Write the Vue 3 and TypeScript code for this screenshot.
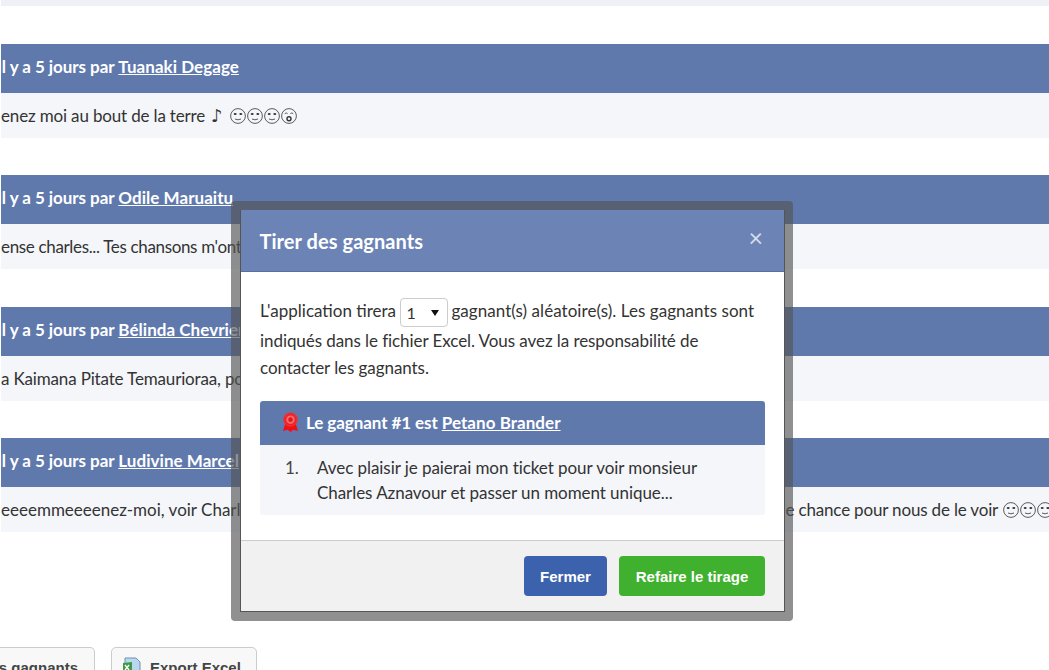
<script setup lang="ts">
interface Post {
  author: string
  text: string
  tail?: string
  note?: boolean
  spacing?: string
  faces: string[]
}

const posts: Post[] = [
  { author: 'Tuanaki Degage', text: 'enez moi au bout de la terre', note: true, faces: ['calm', 'calm', 'calm', 'wow'] },
  { author: 'Odile Maruaitu', text: "ense charles... Tes chansons m'ont", spacing: 'tight', faces: [] },
  { author: 'Bélinda Chevrier', text: 'a Kaimana Pitate Temaurioraa, pour', faces: [] },
  {
    author: 'Ludivine Marcel',
    text: 'eeeemmeeeenez-moi, voir Charles Aznavour en concert serait vraiment un très beau cadeau, et encore un',
    tail: 'e chance pour nous de le voir',
    spacing: 'loose',
    faces: ['calm', 'calm', 'calm'],
  },
]
</script>

<template>
  <div class="page">
    <div class="top-band"></div>

    <article v-for="post in posts" :key="post.author" class="post">
      <header class="post-head">Il y a 5 jours par <a href="#">{{ post.author }}</a></header>
      <div class="post-body" :class="post.spacing">
        <span>{{ post.text }}</span>
        <span v-if="post.tail" class="tail">{{ post.tail }}</span>
        <span v-if="post.note" class="note">♪</span>
        <span v-if="post.faces.length" class="faces">
          <svg v-for="(face, i) in post.faces" :key="i" class="face" viewBox="0 0 16 16">
            <circle cx="8" cy="8" r="7.4" fill="none" stroke="#333" stroke-width="0.8" />
            <template v-if="face === 'calm'">
              <ellipse cx="5.2" cy="6" rx="1.5" ry="1" fill="#333" />
              <ellipse cx="10.8" cy="6" rx="1.5" ry="1" fill="#333" />
              <path d="M5 11 Q8 12.6 11 11" fill="none" stroke="#333" stroke-width="0.8" />
            </template>
            <template v-else>
              <path d="M3.8 5.6 Q5.2 4.4 6.6 5.6 M9.4 5.6 Q10.8 4.4 12.2 5.6" fill="none" stroke="#333" stroke-width="0.8" />
              <circle cx="8" cy="10.8" r="2" fill="none" stroke="#333" stroke-width="1.4" />
            </template>
          </svg>
        </span>
      </div>
    </article>

    <div class="actions">
      <button class="action action-first" type="button">Tirer des gagnants</button>
      <button class="action action-excel" type="button">
        <svg class="xls" viewBox="0 0 20 20">
          <path d="M3 1h11l4 4v14H3z" fill="#b9d8ee" stroke="#6b93b5" />
          <path d="M1 6l9-1v11l-9-1z" fill="#3f9a45" />
          <path d="M3 8l4 5M7 8l-4 5" stroke="#fff" stroke-width="1.4" />
        </svg>
        Export Excel
      </button>
    </div>

    <div class="modal-frame">
      <section class="modal">
        <header class="modal-head">
          <h2>Tirer des gagnants</h2>
          <span class="close">×</span>
        </header>

        <div class="modal-body">
          <p class="intro">
            L'application tirera
            <span class="count-wrap">
              <select class="count">
                <option>1</option>
                <option>2</option>
                <option>3</option>
              </select>
            </span>
            <span class="line-one">gagnant(s) aléatoire(s). Les gagnants sont </span><span class="rest">indiqués dans le fichier Excel. Vous avez la responsabilité de contacter les gagnants.</span>
          </p>

          <div class="winner">
            <div class="winner-head">
              <svg class="rosette" viewBox="0 0 20 22">
                <path d="M5 11 L2 20 L7 18.5 L10 21 L13 18.5 L18 20 L15 11z" fill="#f00f14" />
                <circle cx="10" cy="8" r="7.5" fill="#f5282c" />
                <circle cx="10" cy="8" r="5" fill="#fb6a6a" stroke="#dc1a20" />
                <circle cx="10" cy="8" r="2.4" fill="#dc1a20" />
              </svg>
              <span>Le gagnant #1 est <a href="#">Petano Brander</a></span>
            </div>
            <ol class="winner-list">
              <li>
                <span class="num">1.</span>
                <span>Avec plaisir je paierai mon ticket pour voir monsieur Charles Aznavour et passer un moment unique...</span>
              </li>
            </ol>
          </div>
        </div>

        <footer class="modal-foot">
          <button class="btn btn-blue" type="button">Fermer</button>
          <button class="btn btn-green" type="button">Refaire le tirage</button>
        </footer>
      </section>
    </div>
  </div>
</template>

<style>
html,
body {
  margin: 0;
  height: 670px;
  overflow: hidden;
  background: #fff;
}
</style>

<style scoped>
.page {
  position: relative;
  width: 1049px;
  height: 670px;
  overflow: hidden;
  font-family: Lato, "Open Sans", sans-serif;
  font-size: 17px;
  color: #333;
  box-sizing: border-box;
  padding-left: 1px;
}

.top-band {
  height: 6px;
  background: #eef1f6;
  margin-bottom: 38px;
}

.post {
  margin-bottom: 37px;
}

.post:nth-of-type(2) {
  margin-bottom: 38px;
}

.post-head {
  height: 49px;
  line-height: 45px;
  background: #6079ad;
  color: #fff;
  font-weight: 700;
  letter-spacing: -0.05px;
  text-indent: -4px;
  white-space: nowrap;
  overflow: hidden;
}

.post-head a {
  color: #fff;
  letter-spacing: 0.04px;
  text-decoration: underline;
}

.post-body {
  display: flex;
  align-items: center;
  height: 45px;
  background: #f4f6fa;
  letter-spacing: -0.16px;
  white-space: nowrap;
  overflow: hidden;
}

.post-body.tight {
  letter-spacing: -0.34px;
}

.post-body.loose {
  letter-spacing: 0;
}

.tail {
  letter-spacing: -0.17px;
}

.note {
  margin-left: 6px;
  font-family: "DejaVu Sans", sans-serif;
  font-size: 18px;
  line-height: 1;
}

.faces {
  display: flex;
  flex: none;
  gap: 1px;
  margin-left: 5px;
}

.note + .faces {
  margin-left: 8px;
}

.face {
  flex: none;
  width: 16px;
  height: 16px;
}

.actions {
  display: flex;
  gap: 16px;
  margin: 115px 0 0 -1px;
}

.action {
  display: flex;
  align-items: center;
  height: 40px;
  border: 1px solid #ccc;
  border-radius: 5px;
  background: #f8f8f8;
  color: #444;
  font: 700 15px "Liberation Sans", Arial, sans-serif;
  white-space: nowrap;
}

.action-first {
  width: 95px;
  padding: 0 16px 0 0;
  justify-content: flex-end;
  overflow: hidden;
  border-left: 0;
  border-radius: 0 5px 5px 0;
}

.action-excel {
  width: 146px;
  gap: 8px;
  padding: 0 0 0 10px;
}

.xls {
  width: 20px;
  height: 20px;
}

.modal-frame {
  position: absolute;
  left: 231px;
  top: 201px;
  width: 562px;
  height: 420px;
  box-sizing: border-box;
  padding: 9px 8px 9px 9px;
  background: rgba(84, 84, 84, 0.65);
  border-radius: 4px;
}

.modal {
  display: flex;
  flex-direction: column;
  height: 100%;
  box-sizing: border-box;
  border: 1px solid #555;
  border-top: 0;
  background: #fff;
}

.modal-head {
  display: flex;
  justify-content: space-between;
  align-items: flex-start;
  height: 62px;
  box-sizing: border-box;
  padding: 0 21px 0 18.5px;
  background: #6c83b6;
  border-bottom: 1px solid #5470a6;
  color: #fff;
}

.modal-head h2 {
  margin: 0;
  font-size: 20px;
  font-weight: 700;
  letter-spacing: 0.06px;
  line-height: 62px;
}

.close {
  margin-top: 13px;
  font-size: 25px;
  line-height: 28px;
  color: #d5dcec;
}

.modal-body {
  flex: 1;
  padding: 20px 19px 0;
}

.intro {
  margin: 5px 0 0;
  line-height: 27px;
}

.count-wrap {
  position: relative;
  display: inline-block;
  margin-right: 3px;
  vertical-align: middle;
}

.count-wrap::after {
  content: "";
  position: absolute;
  left: 31px;
  top: 12px;
  border-style: solid;
  border-width: 6px 4px 0;
  border-color: #111 transparent transparent;
  pointer-events: none;
}

.count {
  display: block;
  width: 48px;
  height: 29px;
  box-sizing: border-box;
  margin: 0;
  padding: 0 5px;
  border: 1px solid #ccc;
  border-radius: 4px;
  background: #fff;
  color: #333;
  font: 16px Lato, sans-serif;
  appearance: none;
}

.line-one {
  letter-spacing: 0.05px;
}

.rest {
  letter-spacing: -0.07px;
}

.winner {
  margin-top: 20px;
  border-radius: 3px;
  overflow: hidden;
}

.winner-head {
  display: flex;
  align-items: center;
  gap: 6px;
  height: 44px;
  box-sizing: border-box;
  padding: 0 0 2px 21px;
  background: #6079ad;
  color: #fff;
  font-weight: 700;
  letter-spacing: -0.08px;
}

.winner-head a {
  color: #fff;
  letter-spacing: 0.05px;
  text-decoration: underline;
}

.rosette {
  width: 19px;
  height: 21px;
  margin-top: 1px;
}

.winner-list {
  margin: 0;
  padding: 10px 40px 10px 25px;
  background: #f4f6fa;
  line-height: 25px;
  letter-spacing: -0.06px;
  list-style: none;
}

.winner-list li {
  display: grid;
  grid-template-columns: 32px 1fr;
}

.num {
  color: #444;
}

.modal-foot {
  display: flex;
  justify-content: flex-end;
  gap: 12px;
  height: 71px;
  box-sizing: border-box;
  padding: 15px 19px 0 0;
  background: #f1f1f1;
  border-top: 1px solid #ccc;
}

.btn {
  height: 40px;
  border: 0;
  border-radius: 4px;
  color: #fff;
  font: 700 15px "Liberation Sans", Arial, sans-serif;
}

.btn-blue {
  width: 83px;
  background: #3d62ad;
}

.btn-green {
  width: 146px;
  background: #3fb12e;
}
</style>
